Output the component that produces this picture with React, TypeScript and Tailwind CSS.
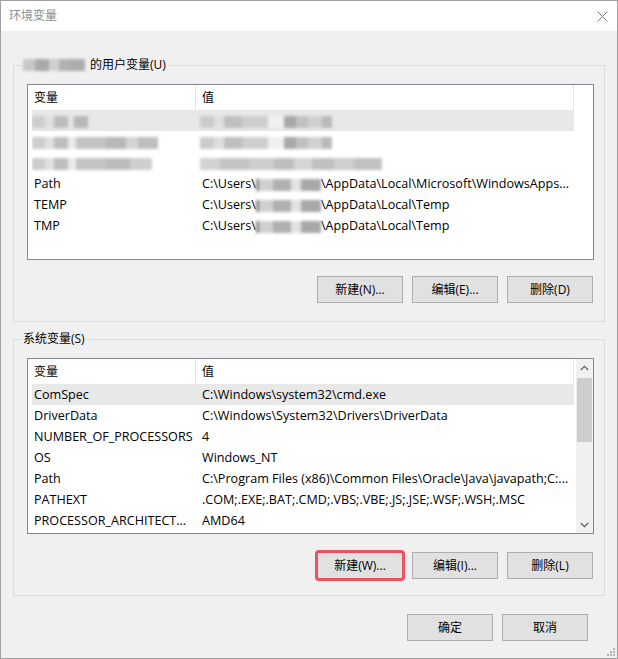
import React from "react";

type Part = [number, string];

// pixelated/blurred stand-in for hidden personal text
function Smudge({ parts, className = "" }: { parts: Part[]; className?: string }) {
  return (
    <span className={`inline-flex h-[12px] items-stretch align-middle blur-[1.6px] ${className}`}>
      {parts.map(([w, c], i) => (
        <span key={i} style={{ width: w, backgroundColor: c }} />
      ))}
    </span>
  );
}

const userSmudge: Part[] = [[12, "#c8c8c8"], [14, "#a9a9a9"], [10, "#cfcfcf"], [10, "#b2b2b2"], [16, "#adadad"]];
const pathSmudge: Part[] = [[3, "#8a8a8a"], [14, "#d0d0d0"], [18, "#b0b0b0"], [10, "#e2e2e2"], [20, "#a8a8a8"]];

type Row = { name: React.ReactNode; value: React.ReactNode };

const userRows: Row[] = [
  {
    name: <Smudge className="-ml-[2px]" parts={[[13, "#cdcdcd"], [9, "#e0e0e0"], [14, "#bdbdbd"], [6, "#e3e3e3"], [14, "#b7b7b7"]]} />,
    value: <Smudge className="-ml-[2px]" parts={[[14, "#cbcbcb"], [10, "#dedede"], [18, "#bfbfbf"], [26, "#cecece"], [16, "#f0f0f0"], [12, "#a8a8a8"], [12, "#c0c0c0"], [14, "#d0d0d0"], [10, "#bababa"]]} />,
  },
  {
    name: <Smudge className="-ml-[2px]" parts={[[13, "#cdcdcd"], [9, "#e0e0e0"], [14, "#bdbdbd"], [8, "#eaeaea"], [30, "#c4c4c4"], [20, "#b8b8b8"], [12, "#d4d4d4"], [20, "#bebebe"]]} />,
    value: <Smudge className="-ml-[2px]" parts={[[14, "#cbcbcb"], [10, "#dedede"], [18, "#bfbfbf"], [26, "#cecece"], [16, "#f0f0f0"], [12, "#a8a8a8"], [12, "#c0c0c0"], [14, "#d0d0d0"], [10, "#bababa"]]} />,
  },
  {
    name: <Smudge className="-ml-[2px]" parts={[[13, "#cdcdcd"], [9, "#e0e0e0"], [14, "#bdbdbd"], [8, "#eaeaea"], [30, "#c4c4c4"], [24, "#bcbcbc"], [22, "#cecece"]]} />,
    value: <Smudge className="-ml-[2px]" parts={[[20, "#d2d2d2"], [30, "#c3c3c3"], [24, "#cdcdcd"], [20, "#bebebe"], [18, "#d6d6d6"], [22, "#c0c0c0"], [20, "#cfcfcf"], [28, "#c1c1c1"]]} />,
  },
  {
    name: "Path",
    value: (
      <>
        C:\Users\<Smudge parts={pathSmudge} />\AppData\Local\Microsoft\WindowsApps...
      </>
    ),
  },
  {
    name: "TEMP",
    value: (
      <>
        C:\Users\<Smudge parts={pathSmudge} />\AppData\Local\Temp
      </>
    ),
  },
  {
    name: "TMP",
    value: (
      <>
        C:\Users\<Smudge parts={pathSmudge} />\AppData\Local\Temp
      </>
    ),
  },
];

const systemRows: Row[] = [
  { name: "ComSpec", value: "C:\\Windows\\system32\\cmd.exe" },
  { name: "DriverData", value: "C:\\Windows\\System32\\Drivers\\DriverData" },
  { name: "NUMBER_OF_PROCESSORS", value: "4" },
  { name: "OS", value: "Windows_NT" },
  { name: "Path", value: "C:\\Program Files (x86)\\Common Files\\Oracle\\Java\\javapath;C:..." },
  { name: "PATHEXT", value: ".COM;.EXE;.BAT;.CMD;.VBS;.VBE;.JS;.JSE;.WSF;.WSH;.MSC" },
  { name: "PROCESSOR_ARCHITECT...", value: "AMD64" },
];

function Chevron({ down = false }: { down?: boolean }) {
  return (
    <svg width="9" height="6" viewBox="0 0 9 6" className={down ? "rotate-180" : ""}>
      <path d="M0.8 5 L4.5 1.3 L8.2 5" fill="none" stroke="#606060" strokeWidth="1.3" />
    </svg>
  );
}

function VarList({ rows, scroll = false }: { rows: Row[]; scroll?: boolean }) {
  return (
    <div className="flex h-[176px] border border-[#828790] bg-white">
      <div className="min-w-0 flex-1 overflow-hidden">
        <div className="flex h-[25px] items-center">
          <div className="flex h-full w-[168px] items-center border-r border-[#e5e5e5] pl-[6px]">变量</div>
          <div className="flex h-full w-[378px] items-center border-r border-[#e5e5e5] pl-[6px]">值</div>
        </div>
        {rows.map((r, i) => (
          <div
            key={i}
            className={`ml-[4px] flex h-[21px] w-[542px] items-center pt-[2px] text-[12.6px] ${i === 0 ? "bg-[#e8e8e8]" : ""}`}
          >
            <div className="w-[164px] overflow-hidden whitespace-nowrap pl-[2px]">{r.name}</div>
            <div className="min-w-0 flex-1 overflow-hidden whitespace-nowrap pl-[6px]">{r.value}</div>
          </div>
        ))}
      </div>
      {scroll && (
        <div className="flex w-[17px] flex-col bg-[#f0f0f0]">
          <div className="flex h-[17px] items-center justify-center">
            <Chevron />
          </div>
          <div className="mx-[1px] mt-[2px] h-[64px] bg-[#cdcdcd]" />
          <div className="flex-1" />
          <div className="flex h-[17px] items-center justify-center">
            <Chevron down />
          </div>
        </div>
      )}
    </div>
  );
}

function Btn({ children, marked = false }: { children: React.ReactNode; marked?: boolean }) {
  return (
    <button className="relative h-[27px] w-[86px] border border-[#adadad] bg-[#e1e1e1] text-[12px] text-black">
      {children}
      {marked && <span className="absolute -inset-[3px] rounded-[4px] border-[3px] border-[#ef4f63]" />}
    </button>
  );
}

function Group({ label, children }: { label: React.ReactNode; children: React.ReactNode }) {
  return (
    <div className="relative border border-[#dcdcdc] pl-[13px] pr-[10px] pt-[18px]">
      <div className="absolute -top-[9px] left-[7px] flex items-center bg-[#f0f0f0] px-[2px] leading-[16px]">
        {label}
      </div>
      {children}
    </div>
  );
}

export default function App() {
  return (
    <div className="relative flex h-[659px] w-[618px] flex-col overflow-hidden border border-[#a0a0a0] bg-[#f0f0f0] font-['Open_Sans','Noto_Sans_CJK_SC',sans-serif] text-[12px] text-black">
      <div className="flex h-[30px] items-center justify-between bg-white pl-[8px] pr-[9px] text-[#8c8c8c]">
        <span>环境变量</span>
        <svg width="11" height="11" viewBox="0 0 11 11">
          <path d="M0.5 0.5 L10.5 10.5 M10.5 0.5 L0.5 10.5" stroke="#7a7a7a" strokeWidth="1" />
        </svg>
      </div>

      <div className="px-[12px] pt-[34px]">
        <Group
          label={
            <>
              <Smudge parts={userSmudge} />
              <span className="ml-[5px]">的用户变量(U)</span>
            </>
          }
        >
          <VarList rows={userRows} />
          <div className="mt-[16px] flex justify-end gap-[9px] pb-[18px] pr-[1px]">
            <Btn>新建(N)...</Btn>
            <Btn>编辑(E)...</Btn>
            <Btn>删除(D)</Btn>
          </div>
        </Group>

        <div className="mt-[17px]">
          <Group label="系统变量(S)">
            <VarList rows={systemRows} scroll />
            <div className="mt-[18px] flex justify-end gap-[9px] pb-[16px] pr-[1px]">
              <Btn marked>新建(W)...</Btn>
              <Btn>编辑(I)...</Btn>
              <Btn>删除(L)</Btn>
            </div>
          </Group>
        </div>

        <div className="mt-[18px] flex justify-end gap-[9px] pr-[17px]">
          <Btn>确定</Btn>
          <Btn>取消</Btn>
        </div>
      </div>

      <svg className="absolute bottom-[1px] right-[1px]" width="10" height="10" viewBox="0 0 10 10">
        <g fill="#b8b8b8">
          <rect x="7" y="1" width="2" height="2" />
          <rect x="4" y="4" width="2" height="2" />
          <rect x="7" y="4" width="2" height="2" />
          <rect x="1" y="7" width="2" height="2" />
          <rect x="4" y="7" width="2" height="2" />
          <rect x="7" y="7" width="2" height="2" />
        </g>
      </svg>
    </div>
  );
}
